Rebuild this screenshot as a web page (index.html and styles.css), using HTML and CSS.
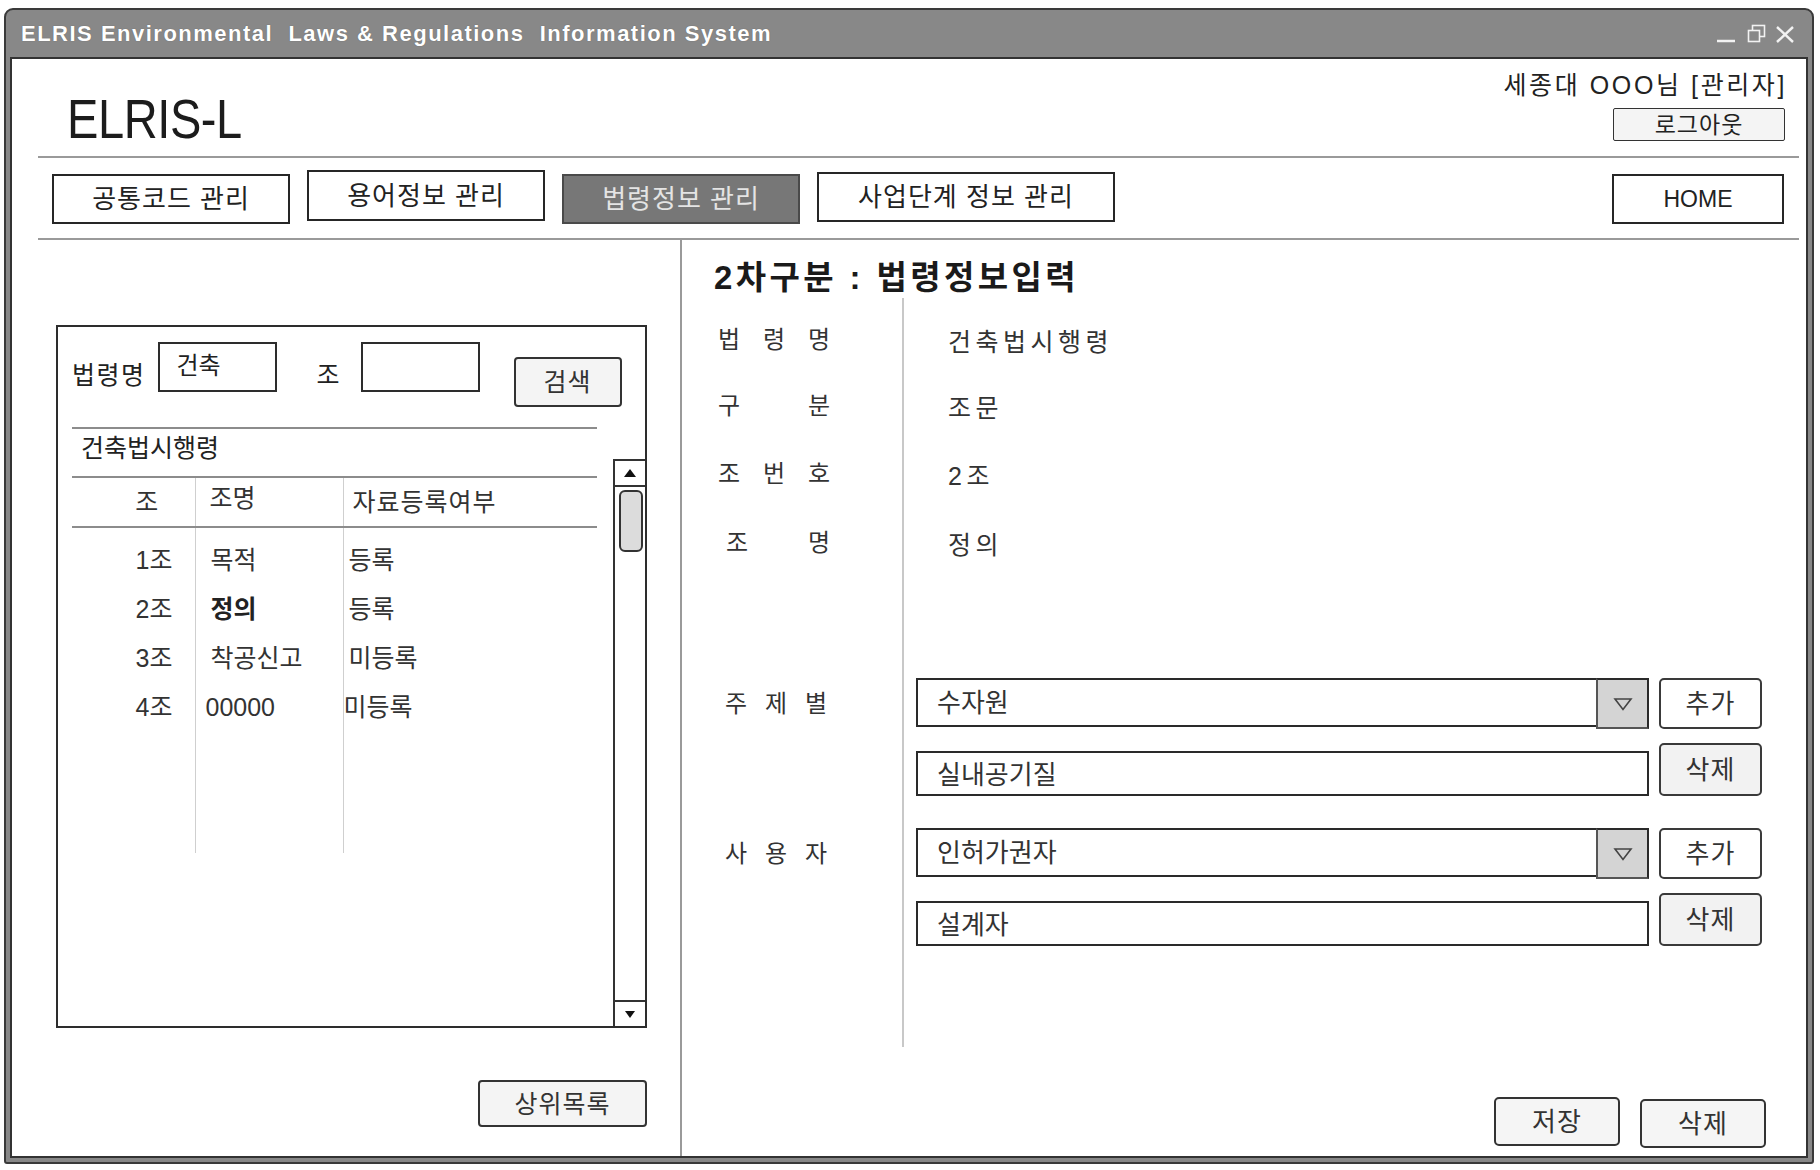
FILE: index.html
```html
<!DOCTYPE html>
<html lang="ko">
<head>
<meta charset="utf-8">
<title>ELRIS-L</title>
<link rel="stylesheet" href="styles.css">
</head>
<body>
<div class="window">
  <div class="titlebar">
    <span class="title">ELRIS Environmental&nbsp; Laws &amp;&nbsp;Regulations&nbsp; Information System</span>
    <svg class="winctrls" width="82" height="22" viewBox="0 0 82 22" aria-hidden="true">
      <line x1="3" y1="18" x2="21" y2="18" stroke="#f2f2f2" stroke-width="2.5"/>
      <rect x="38.5" y="2.5" width="12" height="11" fill="none" stroke="#f2f2f2" stroke-width="1.6"/>
      <rect x="34.5" y="7.5" width="11" height="11" fill="#888" stroke="#f2f2f2" stroke-width="1.6"/>
      <line x1="63" y1="4" x2="79" y2="19" stroke="#f2f2f2" stroke-width="2.4"/>
      <line x1="79" y1="4" x2="63" y2="19" stroke="#f2f2f2" stroke-width="2.4"/>
    </svg>
  </div>
  <div class="client">
    <header class="header">
      <div class="logo">ELRIS-L</div>
      <div class="user">
        <div class="user-name">세종대 OOO님 [관리자]</div>
        <button class="btn btn-logout">로그아웃</button>
      </div>
    </header>
    <nav class="nav">
      <button class="nav-btn">공통코드 관리</button>
      <button class="nav-btn nav-up">용어정보 관리</button>
      <button class="nav-btn active">법령정보 관리</button>
      <button class="nav-btn nav-wide">사업단계 정보 관리</button>
      <button class="nav-btn nav-home">HOME</button>
    </nav>
    <main class="main">
      <section class="left">
        <div class="list-box">
          <div class="list-content">
            <div class="search">
              <span class="search-label">법령명</span>
              <div class="field">건축</div>
              <span class="search-label search-jo">조</span>
              <div class="field"></div>
              <button class="btn btn-search">검색</button>
            </div>
            <div class="law-name">건축법시행령</div>
            <table class="articles">
              <colgroup><col class="c1"><col class="c2"><col class="c3"></colgroup>
              <thead>
                <tr><th class="h1">조</th><th class="h2">조명</th><th class="h3">자료등록여부</th></tr>
              </thead>
              <tbody>
                <tr class="spacer"><td></td><td></td><td></td></tr>
                <tr><td>1조</td><td>목적</td><td>등록</td></tr>
                <tr><td>2조</td><td class="strong">정의</td><td>등록</td></tr>
                <tr><td>3조</td><td>착공신고</td><td>미등록</td></tr>
                <tr><td>4조</td><td class="num">00000</td><td class="tight">미등록</td></tr>
                <tr class="filler"><td></td><td></td><td></td></tr>
              </tbody>
            </table>
          </div>
          <div class="scrollbar">
            <div class="sb-up"><svg width="12" height="8" viewBox="0 0 12 8"><polygon points="6,0 12,8 0,8" fill="#111"/></svg></div>
            <div class="sb-thumb"></div>
            <div class="sb-track"></div>
            <div class="sb-down"><svg width="10" height="7" viewBox="0 0 10 7"><polygon points="0,0 10,0 5,7" fill="#111"/></svg></div>
          </div>
        </div>
        <div class="left-actions">
          <button class="btn btn-up-list">상위목록</button>
        </div>
      </section>

      <section class="right">
        <h2 class="panel-title">2차구분 : 법령정보입력</h2>
        <div class="detail">
          <div class="lbl"><span class="lbl-text">법 령 명</span></div>
          <div class="val">건축법시행령</div>

          <div class="lbl row2"><span class="lbl-text">구 분</span></div>
          <div class="val row2">조문</div>

          <div class="lbl row3"><span class="lbl-text">조 번 호</span></div>
          <div class="val row3">2조</div>

          <div class="lbl"><span class="lbl-text lbl-indent">조 명</span></div>
          <div class="val">정의</div>

          <div class="lbl lbl-form lbl-first"><span class="lbl-text lbl-short">주 제 별</span></div>
          <div class="val-form val-first">
            <div class="frow frow-top">
              <div class="select"><span class="sel-text">수자원</span><span class="sel-arrow"><svg width="20" height="14" viewBox="0 0 20 14"><polygon points="2,2 18,2 10,12.5" fill="none" stroke="#444" stroke-width="1.6"/></svg></span></div>
              <button class="btn btn-small">추가</button>
            </div>
            <div class="frow frow-bottom">
              <div class="input">실내공기질</div>
              <button class="btn btn-small btn-gray">삭제</button>
            </div>
          </div>

          <div class="lbl lbl-form"><span class="lbl-text lbl-short">사 용 자</span></div>
          <div class="val-form">
            <div class="frow frow-top">
              <div class="select"><span class="sel-text">인허가권자</span><span class="sel-arrow"><svg width="20" height="14" viewBox="0 0 20 14"><polygon points="2,2 18,2 10,12.5" fill="none" stroke="#444" stroke-width="1.6"/></svg></span></div>
              <button class="btn btn-small">추가</button>
            </div>
            <div class="frow frow-bottom">
              <div class="input">설계자</div>
              <button class="btn btn-small btn-gray">삭제</button>
            </div>
          </div>
        </div>
        <div class="actions">
          <button class="btn btn-action btn-save">저장</button>
          <button class="btn btn-action">삭제</button>
        </div>
      </section>
    </main>
  </div>
</div>
</body>
</html>
```

FILE: styles.css
```css
* { box-sizing: border-box; }

html, body {
  margin: 0;
  padding: 0;
  background: #fff;
}

body {
  font-family: "Liberation Sans", "Noto Sans CJK KR", sans-serif;
  color: #222;
}

button {
  font-family: "Liberation Sans", "Noto Sans CJK KR", sans-serif;
  color: #222;
  padding: 0;
  margin: 0;
}

/* ---------- window frame ---------- */
.window {
  margin: 8px 0 0 4px;
  width: 1810px;
  height: 1156px;
  border: 2px solid #3a3a3a;
  border-radius: 9px 9px 3px 3px;
  background: #888;
  padding: 0 4px 4px;
  display: flex;
  flex-direction: column;
}

.titlebar {
  flex: none;
  height: 47px;
  display: flex;
  align-items: center;
  justify-content: space-between;
  padding: 0 12px 0 11px;
}

.title {
  font-family: "Liberation Sans", sans-serif;
  font-weight: bold;
  font-size: 22px;
  letter-spacing: 1.5px;
  color: #fff;
  text-shadow: 0 0 1px rgba(0, 0, 0, 0.35);
}

.winctrls { display: block; }

.client {
  flex: 1;
  min-height: 0;
  background: #fff;
  border: 2px solid #333;
  padding: 0 7px 0 26px;
  display: flex;
  flex-direction: column;
}

/* ---------- header ---------- */
.header {
  flex: none;
  height: 99px;
  display: flex;
  justify-content: space-between;
  border-bottom: 2px solid #9a9a9a;
  padding: 0 14px 0 29px;
}

.logo {
  margin-top: 32px;
  font-family: "Liberation Sans", sans-serif;
  font-size: 56px;
  line-height: 56px;
  color: #1c1c1c;
  letter-spacing: -0.5px;
  transform: scaleX(0.84);
  transform-origin: 0 50%;
}

.user {
  display: flex;
  flex-direction: column;
  align-items: flex-end;
  padding-top: 11px;
}

.user-name {
  font-size: 25px;
  line-height: 30px;
  letter-spacing: 2.6px;
  margin-right: -2px;
  white-space: nowrap;
  color: #222;
}

.btn {
  border: 2px solid #333;
  border-radius: 4px;
  background: #f4f4f4;
}

.btn-logout {
  width: 172px;
  height: 33px;
  margin-top: 8px;
  font-size: 23px;
  line-height: 28px;
  letter-spacing: 1px;
  border-radius: 2px;
  border-width: 1.5px;
}

/* ---------- nav ---------- */
.nav {
  flex: none;
  height: 82px;
  display: flex;
  align-items: flex-start;
  padding: 16px 15px 0 14px;
  border-bottom: 2px solid #9a9a9a;
}

.nav-btn {
  flex: none;
  width: 238px;
  height: 50px;
  border: 2px solid #262626;
  background: #fff;
  font-size: 26px;
  line-height: 30px;
  letter-spacing: 1px;
  margin-right: 17px;
  color: #222;
  white-space: nowrap;
}

.nav-up { margin-top: -4px; height: 51px; }

.nav-btn.active {
  background: #777;
  border-color: #4a4a4a;
  color: #e4e4e4;
}

.nav-wide { width: 298px; margin-top: -2px; }

.nav-home {
  width: 172px;
  margin-left: auto;
  margin-right: 0;
  font-size: 23px;
  letter-spacing: 0;
}

/* ---------- main ---------- */
.main {
  flex: 1;
  min-height: 0;
  display: flex;
}

.left {
  flex: none;
  width: 644px;
  border-right: 2px solid #9a9a9a;
  padding: 85px 0 0 18px;
  display: flex;
  flex-direction: column;
}

.list-box {
  width: 591px;
  height: 703px;
  border: 2px solid #2d2d2d;
  display: flex;
}

.list-content {
  flex: 1;
  min-width: 0;
}

.search {
  height: 100px;
  display: flex;
  align-items: flex-start;
  padding: 15px 0 0 14px;
  font-size: 25px;
}

.search-label {
  flex: none;
  white-space: nowrap;
  line-height: 30px;
  margin: 18px 12px 0 0;
  letter-spacing: 1.5px;
  color: #222;
}

.search-jo { margin: 18px 21px 0 40px; letter-spacing: 0; }

.field {
  flex: none;
  width: 119px;
  height: 50px;
  border: 2px solid #2d2d2d;
  padding: 7px 0 0 17px;
  font-size: 24px;
  line-height: 30px;
}

.btn-search {
  flex: none;
  width: 108px;
  height: 50px;
  margin: 15px 0 0 34px;
  font-size: 25px;
  line-height: 30px;
  letter-spacing: 1px;
  color: #333;
}

.law-name {
  height: 51px;
  margin: 0 16px 0 14px;
  border-top: 2px solid #8c8c8c;
  border-bottom: 2px solid #8c8c8c;
  padding-left: 9px;
  font-size: 25px;
  line-height: 38px;
  color: #222;
}

.articles {
  width: 525px;
  margin-left: 14px;
  border-collapse: collapse;
  table-layout: fixed;
  font-size: 25px;
  color: #333;
}

.articles col.c1 { width: 123px; }
.articles col.c2 { width: 148px; }
.articles col.c3 { width: 254px; }

.articles th {
  height: 49px;
  font-weight: normal;
  border-bottom: 2px solid #8c8c8c;
  vertical-align: middle;
  padding: 0;
  line-height: 30px;
}

.articles th + th,
.articles td + td {
  border-left: 1px solid #cfcfcf;
}

.articles th.h1 { text-align: center; padding-left: 27px; }
.articles th.h2 { text-align: left; padding-left: 14px; vertical-align: top; padding-top: 5px; }
.articles th.h3 { text-align: left; padding-left: 9px; letter-spacing: 1px; }

.articles td {
  height: 49px;
  padding: 0;
  line-height: 30px;
  vertical-align: middle;
  text-align: left;
}

.articles td:first-child { text-align: right; padding-right: 22px; }
.articles td:nth-child(2) { padding-left: 15px; }
.articles td:nth-child(3) { padding-left: 5px; }
.articles td.num { padding-left: 10px; }
.articles td.tight { padding-left: 0; }
.articles td.strong { font-weight: bold; color: #222; }

.articles tr.spacer td { height: 8px; }
.articles tr.filler td { height: 122px; }

/* scrollbar */
.scrollbar {
  flex: none;
  width: 32px;
  margin-top: 132px;
  display: flex;
  flex-direction: column;
  border-left: 2px solid #333;
  border-top: 2px solid #333;
}

.sb-up {
  height: 26px;
  border-bottom: 2px solid #333;
  display: flex;
  align-items: center;
  justify-content: center;
}

.sb-thumb {
  height: 62px;
  margin: 3px 2px 0 4px;
  border: 2px solid #333;
  border-radius: 6px;
  background: #dcdcdc;
}

.sb-track { flex: 1; }

.sb-down {
  height: 26px;
  border-top: 2px solid #333;
  display: flex;
  align-items: center;
  justify-content: center;
}

.left-actions {
  width: 591px;
  margin-top: 52px;
  display: flex;
  justify-content: flex-end;
}

.btn-up-list {
  width: 169px;
  height: 47px;
  font-size: 25px;
  line-height: 30px;
  letter-spacing: 1px;
  color: #333;
}

/* ---------- right panel ---------- */
.right {
  flex: 1;
  min-width: 0;
  display: flex;
  flex-direction: column;
  padding: 0 33px 8px 32px;
}

.panel-title {
  margin: 18px 0 0;
  font-size: 33px;
  line-height: 40px;
  font-weight: bold;
  color: #1a1a1a;
  letter-spacing: 3.4px;
}

.detail {
  height: 749px;
  display: grid;
  grid-template-columns: 188px 1fr;
  align-content: start;
  padding-top: 9px;
  background: linear-gradient(#c8c8c8, #c8c8c8) no-repeat 188px 0 / 2px 100%;
}

.lbl {
  height: 66px;
  display: flex;
  align-items: center;
  padding-left: 4px;
  font-size: 24px;
  color: #333;
}

.lbl.row2, .val.row2 { height: 65px; }
.lbl.row3, .val.row3 { height: 72px; }

.lbl-text {
  display: inline-block;
  width: 112px;
  text-align: justify;
  text-align-last: justify;
  line-height: 30px;
}

.lbl-indent { padding-left: 8px; }

.lbl-short { width: 102px; margin-left: 7px; }

.val {
  height: 66px;
  display: flex;
  align-items: center;
  padding-left: 46px;
  font-size: 25px;
  letter-spacing: 4.5px;
  color: #333;
}

.lbl-form {
  height: 51px;
  align-items: center;
  margin-top: 32px;
}

.lbl-first { margin-top: 102px; }

.val-form {
  padding-left: 14px;
  margin-top: 32px;
}

.val-first { margin-top: 102px; }

.frow {
  display: flex;
  gap: 10px;
}

.frow-top { align-items: flex-start; height: 51px; }
.frow-bottom { align-items: flex-end; height: 53px; margin-top: 14px; }

.select {
  flex: none;
  width: 733px;
  height: 49px;
  border: 2px solid #2a2a2a;
  display: flex;
  align-items: center;
  background: #fff;
}

.sel-text {
  padding-left: 19px;
  font-size: 26px;
  line-height: 30px;
  color: #333;
}

.sel-arrow {
  align-self: stretch;
  width: 53px;
  margin: -2px -2px -4px auto;
  background: #d4d4d4;
  border: 2px solid #555;
  border-top-color: #2a2a2a;
  border-right-color: #2a2a2a;
  display: flex;
  align-items: center;
  justify-content: center;
}

.input {
  flex: none;
  width: 733px;
  height: 45px;
  border: 2px solid #2a2a2a;
  padding: 7px 0 0 19px;
  font-size: 26px;
  line-height: 30px;
  color: #333;
}

.btn-small {
  flex: none;
  width: 103px;
  height: 51px;
  background: #fff;
  border: 2px solid #3a3a3a;
  border-radius: 5px;
  font-size: 26px;
  line-height: 30px;
  letter-spacing: 1px;
  color: #333;
}

.btn-gray {
  height: 53px;
  background: #f2f2f2;
}

.actions {
  margin-top: auto;
  display: flex;
  justify-content: flex-end;
  align-items: flex-end;
  gap: 20px;
}

.btn-action {
  width: 126px;
  height: 49px;
  border-radius: 5px;
  font-size: 26px;
  line-height: 30px;
  letter-spacing: 1px;
  color: #333;
  background: #f5f5f5;
}

.btn-save { margin-bottom: 2px; }
```
